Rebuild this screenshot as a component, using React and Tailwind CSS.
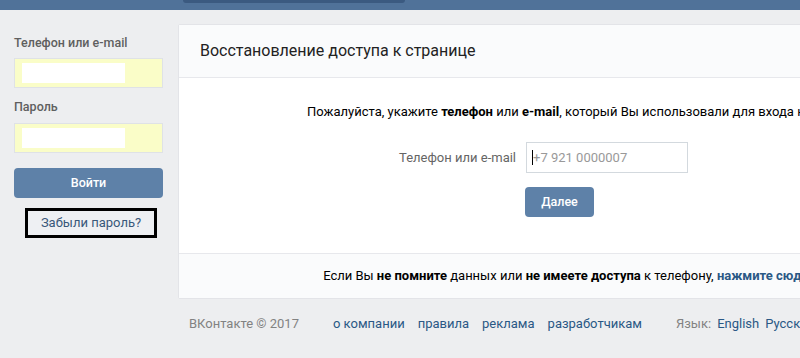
export default function App() {
  return (
    <div className="w-[800px] h-[358px] overflow-hidden bg-[#edeef0] font-['Roboto',sans-serif] text-[13px]">
      {/* header */}
      <div className="h-[10px] bg-[#507299] relative">
        <div className="absolute left-[183px] top-0 w-[222px] h-[3px] bg-[#3b5a80] rounded-b-[6px]" />
      </div>
      <div className="flex gap-[15px] pl-[14px]">
        {/* left column */}
        <div className="w-[149px] shrink-0 pt-[25px] flex flex-col">
          <div className="h-[16px] leading-[16px] text-[12.5px] font-medium text-[#5f5f5f]">Телефон или e-mail</div>
          <div className="mt-[7px] h-[30px] border border-[#dfe2e6] bg-[#fafdc8] pl-[7px] pt-[4px]">
            <div className="w-[103px] h-[20px] bg-white" />
          </div>
          <div className="mt-[11px] h-[16px] leading-[16px] text-[12.5px] font-medium text-[#5f5f5f]">Пароль</div>
          <div className="mt-[8px] h-[30px] border border-[#dfe2e6] bg-[#fafdc8] pl-[7px] pt-[4px]">
            <div className="w-[103px] h-[20px] bg-white" />
          </div>
          <button className="mt-[15px] h-[30px] rounded-[4px] bg-[#5e81a8] text-white text-[12.5px] font-medium">Войти</button>
          <div className="mt-[10px] ml-[11px] w-[132px] h-[30px] border-[3px] border-black bg-[#eef0f3] flex items-center justify-center text-[13px] text-[#39587a]">
            Забыли пароль?
          </div>
        </div>
        {/* main card */}
        <div className="shrink-0 flex flex-col">
          <div className="mt-[14px] w-[797px] border border-[#e3e4e8] rounded-[2px] bg-white">
            <div className="h-[53px] bg-[#fafbfc] border-b border-[#e7e8ec] flex items-center pl-[21px] text-[16px] text-[#222]">
              Восстановление доступа к странице
            </div>
            <div className="h-[175px] flex flex-col items-center pt-[26px]">
              <div className="leading-[16px] text-black">
                Пожалуйста, укажите <b className="font-bold">телефон</b> или <b className="font-bold">e-mail</b>, который Вы использовали для входа на сайт.
              </div>
              <div className="flex items-center self-start ml-[220px] mt-[22px]">
                <div className="text-[#656565] mr-[10px]">Телефон или e-mail</div>
                <div className="w-[162px] h-[31px] border border-[#d3d9de] flex items-center pl-[5px] text-[#999]">
                  <span className="inline-block w-px h-[15px] bg-black" />
                  <span>+7 921 0000007</span>
                </div>
              </div>
              <button className="self-start ml-[346px] mt-[14px] w-[69px] h-[30px] rounded-[4px] bg-[#5e81a8] text-white text-[12.5px] font-medium">Далее</button>
            </div>
            <div className="h-[45px] bg-[#fafbfc] border-t border-[#e7e8ec] flex items-center justify-center pr-[18px] text-black">
              <span>
                Если Вы <b className="font-bold">не помните</b> данных или <b className="font-bold">не имеете доступа</b> к телефону, <b className="font-bold text-[#2a5885]">нажмите сюда</b>.
              </span>
            </div>
          </div>
          <div className="flex items-center mt-[17px] pl-[11px] h-[16px] text-[13px]">
            <span className="text-[#828282]">ВКонтакте © 2017</span>
            <span className="ml-[34px] text-[#2a5885]">о компании</span>
            <span className="ml-[13px] text-[#2a5885]">правила</span>
            <span className="ml-[13px] text-[#2a5885]">реклама</span>
            <span className="ml-[13px] text-[#2a5885]">разработчикам</span>
            <span className="ml-[34px] text-[#828282]">Язык:</span>
            <span className="ml-[6px] text-[#2a5885]">English</span>
            <span className="ml-[6px] text-[#2a5885]">Русский</span>
          </div>
        </div>
      </div>
    </div>
  );
}
